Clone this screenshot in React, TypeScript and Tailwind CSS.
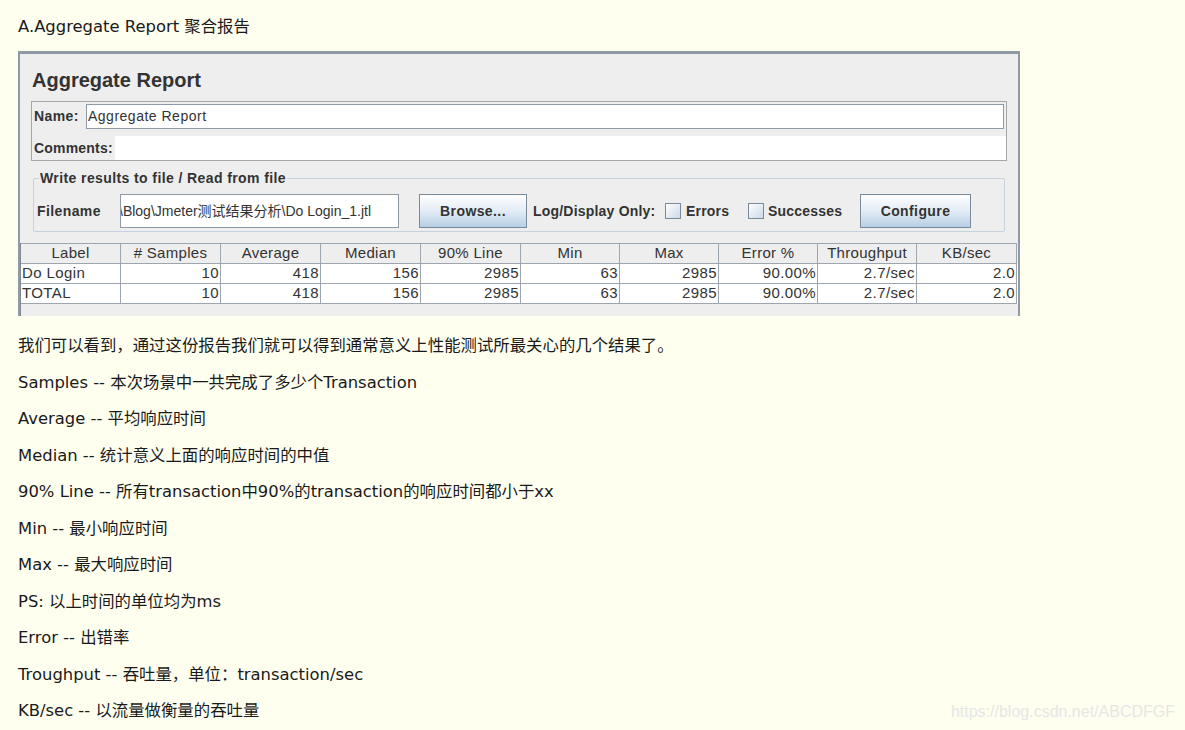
import React from "react";

const cols = [
  { name: "Label", w: "w-[100px]" },
  { name: "# Samples", w: "w-[100px]" },
  { name: "Average", w: "w-[100px]" },
  { name: "Median", w: "w-[100px]" },
  { name: "90% Line", w: "w-[100px]" },
  { name: "Min", w: "w-[99px]" },
  { name: "Max", w: "w-[99px]" },
  { name: "Error %", w: "w-[99px]" },
  { name: "Throughput", w: "w-[99px]" },
  { name: "KB/sec", w: "w-[100px]" },
];

const rows = [
  ["Do Login", "10", "418", "156", "2985", "63", "2985", "90.00%", "2.7/sec", "2.0"],
  ["TOTAL", "10", "418", "156", "2985", "63", "2985", "90.00%", "2.7/sec", "2.0"],
];

const notes = [
  "我们可以看到，通过这份报告我们就可以得到通常意义上性能测试所最关心的几个结果了。",
  "Samples -- 本次场景中一共完成了多少个Transaction",
  "Average -- 平均响应时间",
  "Median -- 统计意义上面的响应时间的中值",
  "90% Line -- 所有transaction中90%的transaction的响应时间都小于xx",
  "Min -- 最小响应时间",
  "Max -- 最大响应时间",
  "PS: 以上时间的单位均为ms",
  "Error -- 出错率",
  "Troughput -- 吞吐量，单位：transaction/sec",
  "KB/sec -- 以流量做衡量的吞吐量",
];

const javaFont = { fontFamily: '"Liberation Sans", Arial, "Noto Sans CJK SC", sans-serif' };

function JButton({ label, w }: { label: string; w: string }) {
  return (
    <div
      className={`${w} h-[34px] flex items-center justify-center border border-[#7a8a99] bg-gradient-to-b from-[#ffffff] via-[#e3ecf5] to-[#b8cfe5] text-[14px] font-bold tracking-[0.4px] text-[#333]`}
    >
      {label}
    </div>
  );
}

function CheckBox() {
  return <div className="w-[16px] h-[16px] border border-[#7a8a99] bg-gradient-to-br from-[#ffffff] to-[#cbd9e8]" />;
}

function JMeterPanel() {
  return (
    <div className="mt-[6px] w-[1002px] border-t-[3px] border-l-2 border-r-2 border-[#8f9aa6]" style={javaFont}>
      <div className="h-[262px] bg-[#eeeeee] flex flex-col overflow-hidden">
        <div className="mt-[13px] pl-[12px] h-[26px] leading-[26px] text-[20px] font-bold text-[#333]">Aggregate Report</div>

        <div className="mt-[8px] mx-[11px] border border-[#a6a6a6] pt-[2px] flex flex-col">
          <div className="flex items-center pl-[2px] pr-[2px] h-[25px]">
            <span className="w-[52px] text-[14px] font-bold tracking-[0.4px] text-[#333]">Name:</span>
            <div className="flex-1 h-[25px] border border-[#8e9aa6] bg-white flex items-center pl-[1px] text-[14px] tracking-[0.5px] text-[#333]">
              Aggregate Report
            </div>
          </div>
          <div className="mt-[7px] flex items-center h-[24px] pl-[2px]">
            <span className="w-[81px] text-[14px] font-bold tracking-[0.2px] text-[#333]">Comments:</span>
            <div className="flex-1 h-[24px] bg-white" />
          </div>
        </div>

        <div className="relative mt-[17px] mx-[13px] h-[54px] border border-[#c6d2dd] rounded-[2px] pt-[15px] pl-[3px] flex items-start">
          <span className="absolute left-[5px] top-[-10px] px-[1px] bg-[#eeeeee] text-[14px] leading-[18px] font-bold tracking-[0.4px] text-[#333]">
            Write results to file / Read from file
          </span>
          <span className="w-[83px] h-[34px] flex items-center text-[14px] font-bold tracking-[0.4px] text-[#333]">Filename</span>
          <div className="w-[279px] h-[34px] border border-[#8e9aa6] bg-white flex items-center overflow-hidden whitespace-nowrap text-[14px] text-[#333]">
            <span className="ml-[-2px]">\Blog\Jmeter测试结果分析\Do Login_1.jtl</span>
          </div>
          <div className="ml-[20px]">
            <JButton label="Browse..." w="w-[108px]" />
          </div>
          <div className="h-[34px] flex items-center text-[14px] font-bold tracking-[0.2px] text-[#333]">
            <span className="ml-[6px] w-[132px]">Log/Display Only:</span>
            <CheckBox />
            <span className="ml-[5px] w-[62px]">Errors</span>
            <CheckBox />
            <span className="ml-[4px] w-[92px]">Successes</span>
          </div>
          <JButton label="Configure" w="w-[111px]" />
        </div>

        <div className="mt-[11px] flex-1 border-l border-[#7f8a95] text-[15px] text-[#333]">
          <div className="flex h-[21px] bg-[#eeeeee]">
            {cols.map((c) => (
              <div
                key={c.name}
                className={`${c.w} shrink-0 h-[21px] flex items-center justify-center border-r border-b border-t border-[#9da6ae] tracking-[0.3px]`}
              >
                {c.name}
              </div>
            ))}
          </div>
          {rows.map((r, i) => (
            <div key={i} className="flex h-[20px] bg-white">
              {r.map((v, j) => (
                <div
                  key={j}
                  className={`${cols[j].w} shrink-0 h-[20px] flex items-center border-r border-b border-[#9da6ae] px-[1px] tracking-[0.4px] ${
                    j === 0 ? "justify-start" : "justify-end"
                  }`}
                >
                  {v}
                </div>
              ))}
            </div>
          ))}
        </div>
      </div>
    </div>
  );
}

export default function App() {
  return (
    <div
      className="relative w-full min-h-screen bg-[#fffff0] px-[18px] text-[16.4px] text-[#1a1a1a] overflow-hidden"
      style={{ fontFamily: '"DejaVu Sans", "Noto Sans CJK SC", sans-serif' }}
    >
      <div className="pt-[9px] h-[45px] leading-[36px] whitespace-nowrap">A.Aggregate Report 聚合报告</div>
      <JMeterPanel />
      <div className="mt-[12px] flex flex-col">
        {notes.map((n) => (
          <div key={n} className="h-[36.5px] leading-[36.5px] whitespace-nowrap">
            {n}
          </div>
        ))}
      </div>
      <div
        className="absolute right-[10px] top-[700px] text-[16px] leading-[24px] text-[#e6e6e6]"
        style={{ fontFamily: '"Liberation Sans", Arial, sans-serif' }}
      >
        https://blog.csdn.net/ABCDFGF
      </div>
    </div>
  );
}
